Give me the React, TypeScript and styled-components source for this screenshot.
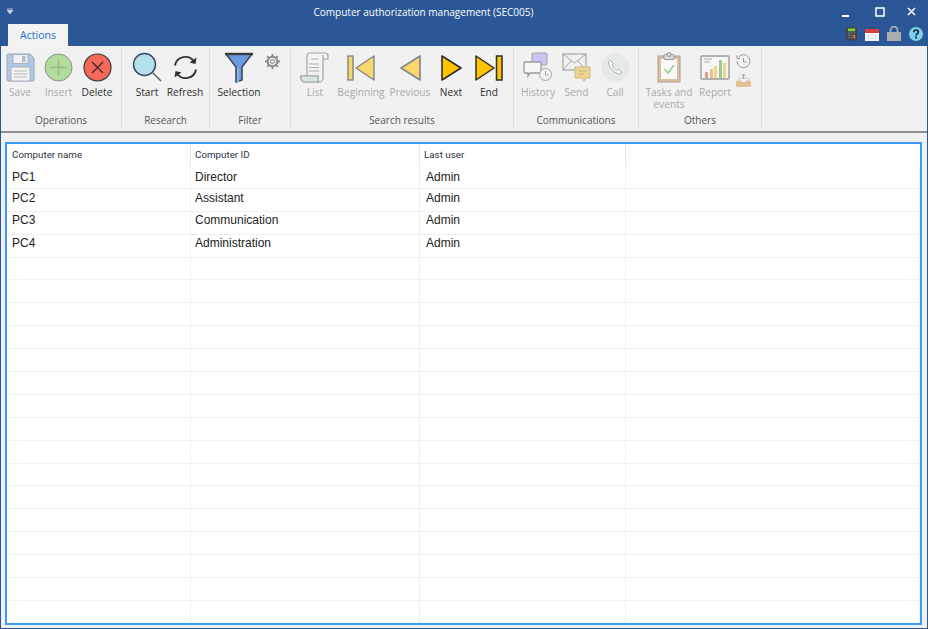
import React, { ReactNode } from "react";
import styled, { createGlobalStyle } from "styled-components";

const Global = createGlobalStyle`
  html, body { margin: 0; padding: 0; background: #fff; }
  * { box-sizing: border-box; }
`;

const Window = styled.div`
  width: 928px;
  height: 629px;
  display: flex;
  flex-direction: column;
  background: #f0f0f0;
  border: 1px solid #2b5797;
  border-top-width: 0;
  overflow: hidden;
  font-family: "Open Sans", "Liberation Sans", sans-serif;
`;

const TitleBar = styled.div`
  height: 24px;
  flex: none;
  display: flex;
  align-items: center;
  background: #2b5797;
  padding: 0 7px 1px 6px;
`;

const TitleText = styled.div`
  flex: 1;
  text-align: center;
  color: #fff;
  font-size: 10px;
  padding-right: 8px;
`;

const WindowControls = styled.div`
  display: flex;
  align-items: center;
  gap: 20px;
  padding-right: 4px;
`;

const TabBar = styled.div`
  height: 22px;
  flex: none;
  display: flex;
  justify-content: space-between;
  align-items: flex-end;
  background: #2b5797;
  padding: 0 4px 0 7px;
`;

const Tab = styled.div`
  width: 60px;
  height: 22px;
  padding-top: 4px;
  background: #f2f2f2;
  color: #2470c8;
  font-size: 10.5px;
  text-align: center;
`;

const QuickIcons = styled.div`
  display: flex;
  align-items: center;
  gap: 8px;
  padding-bottom: 5px;
`;

const Ribbon = styled.div`
  height: 87px;
  flex: none;
  display: flex;
  background: #f1f1f1;
  padding-top: 3px;
  border-bottom: 2px solid #8e8e8e;
`;

const Group = styled.section<{ $w: number; $pad: number }>`
  width: ${(p) => p.$w}px;
  height: 79px;
  flex: none;
  display: flex;
  flex-direction: column;
  padding-left: ${(p) => p.$pad}px;
  border-right: 1px solid #dcdcdc;
`;

const GroupTools = styled.div`
  flex: 1;
  display: flex;
`;

const GroupLabel = styled.div<{ $offset: number }>`
  height: 15px;
  margin-left: ${(p) => p.$offset}px;
  text-align: center;
  color: #555;
  font-size: 10px;
  line-height: 15px;
`;

const Tool = styled.div<{ $w: number; $off?: boolean }>`
  width: ${(p) => p.$w}px;
  flex: none;
  display: flex;
  flex-direction: column;
  align-items: center;
  font-size: 10.2px;
  line-height: 12px;
  text-align: center;
  color: ${(p) => (p.$off ? "#a9a9a9" : "#2e2e2e")};
`;

const ToolIcon = styled.div<{ $off?: boolean }>`
  height: 33px;
  margin-top: 2px;
  margin-bottom: 2px;
  display: flex;
  align-items: center;
  justify-content: center;
  opacity: ${(p) => (p.$off ? 0.55 : 1)};
`;

const SideIcons = styled.div`
  width: 16px;
  display: flex;
  flex-direction: column;
  align-items: center;
  gap: 5px;
  padding-top: 5px;
  opacity: 0.55;
`;

const GearSlot = styled.div`
  margin-left: -3px;
  padding-top: 3px;
  opacity: 0.75;
`;

const Workspace = styled.div`
  flex: 1;
  min-height: 0;
  padding: 9px 5px 3px 4px;
  background: #f0f0f0;
`;

const Frame = styled.div`
  height: 100%;
  border: 2px solid #3c9bf6;
  background: #fff;
  overflow: hidden;
`;

const HeaderRow = styled.div`
  display: grid;
  grid-template-columns: 184px 229px 206px 1fr;
  height: 22px;
`;

const HeaderCell = styled.div<{ $last?: boolean; $inset: number }>`
  padding-left: ${(p) => p.$inset}px;
  font-family: Roboto, "Liberation Sans", sans-serif;
  font-size: 9.8px;
  line-height: 22px;
  color: #2d3344;
  border-right: ${(p) => (p.$last ? "none" : "1px solid #e8e8e8")};
`;

const Row = styled.div`
  display: grid;
  grid-template-columns: 184px 229px 206px 1fr;
  height: 22.9px;
  border-bottom: 1px solid #f0f0f0;
`;

const Cell = styled.div<{ $inset: number; $lift: number }>`
  padding: ${(p) => 3 - p.$lift}px 0 0 ${(p) => p.$inset}px;
  font-family: "Liberation Sans", Arial, sans-serif;
  font-size: 12px;
  line-height: 17px;
  color: #222;
  border-right: 1px solid #f0f0f0;
`;

const Funnel = () => (
  <svg width="30" height="31" viewBox="0 0 30 31">
    <path d="M2 2h26L18 15v13l-6 2V15Z" fill="#6b9be0" stroke="#3d4a5c" strokeWidth="1.6" strokeLinejoin="round" />
    <path d="M1 2h28" stroke="#3a3a3a" strokeWidth="2.4" />
    <path d="M14 16v14" stroke="#8fb4e8" strokeWidth="2" />
  </svg>
);

const SaveIcon = () => (
  <svg width="29" height="29" viewBox="0 0 29 29">
    <path d="M2 1h22l4 4v22a1 1 0 0 1-1 1H2a1 1 0 0 1-1-1V2a1 1 0 0 1 1-1Z" fill="#7ea7dc" stroke="#5a6d85" />
    <rect x="7" y="1.500" width="15" height="9" fill="#eef0f3" stroke="#6b7b90" />
    <rect x="16" y="3" width="3.500" height="6" fill="#7d8ea5" />
    <rect x="5" y="14" width="19" height="14" fill="#f5f5f5" stroke="#6b7b90" />
    <path d="M8 18h13M8 21h13M8 24h13" stroke="#8a8a8a" />
  </svg>
);

const InsertIcon = () => (
  <svg width="29" height="29" viewBox="0 0 29 29">
    <circle cx="14.500" cy="14.500" r="13.500" fill="#7ecb55" stroke="#3f3f3f" />
    <path d="M14.500 6.500v16M6.500 14.500h16" stroke="#4f8a30" strokeWidth="1.400" />
  </svg>
);

const DeleteIcon = () => (
  <svg width="29" height="29" viewBox="0 0 29 29">
    <circle cx="14.500" cy="14.500" r="13.500" fill="#f4695a" stroke="#3c3c3c" strokeWidth="1.200" />
    <path d="M9 9l11 11M20 9 9 20" stroke="#3a2a2a" strokeWidth="1.300" />
  </svg>
);

const SearchIcon = () => (
  <svg width="30" height="31" viewBox="0 0 30 31">
    <circle cx="12.500" cy="12.500" r="11" fill="#b5e1ef" stroke="#3c4650" strokeWidth="1.400" />
    <path d="M20.500 20.500 29 29" stroke="#5c6670" strokeWidth="1.500" />
  </svg>
);

const RefreshIcon = () => (
  <svg width="27" height="27" viewBox="0 0 27 27" fill="none" stroke="#333" strokeWidth="1.900">
    <path d="M3 11.500A10.500 10.500 0 0 1 22 7.500" />
    <path d="M24 15.500A10.500 10.500 0 0 1 5 19.500" />
    <path d="M24.500 3.500 23.500 10l-6-1.500Z" fill="#333" stroke="none" />
    <path d="M2.500 23.500 3.500 17l6 1.500Z" fill="#333" stroke="none" />
  </svg>
);

const GearIcon = () => (
  <svg width="15" height="15" viewBox="0 0 15 15">
    <circle cx="7.500" cy="7.500" r="4.800" fill="none" stroke="#666" strokeWidth="2" />
    <circle cx="7.500" cy="7.500" r="2.100" fill="#ddd" stroke="#666" />
    <path
      d="M7.500 0v3M7.500 12v3M0 7.500h3M12 7.500h3M2.200 2.200l2.100 2.100M10.700 10.700l2.100 2.100M12.800 2.200l-2.100 2.100M4.300 10.700l-2.100 2.100"
      stroke="#666"
      strokeWidth="1.800"
    />
  </svg>
);

const ListIcon = () => (
  <svg width="30" height="31" viewBox="0 0 30 31">
    <path d="M7 27V4a3 3 0 0 1 3-3h15a3 3 0 0 1 3 3v3h-5" fill="#f6f6f6" stroke="#666" strokeWidth="1.200" />
    <path d="M23 3v23a4 4 0 0 1-4 4H5a4 4 0 0 1-4-4v-2h17v2" fill="#f3f3f3" stroke="#666" strokeWidth="1.200" />
    <path d="M1 24h17v3a3 3 0 0 0 1 3H5a4 4 0 0 1-4-4Z" fill="#c9dde0" stroke="#666" strokeWidth="1.200" />
    <path d="M11 7h7M9 12h10M9 15.500h10M9 19h10" stroke="#777" />
  </svg>
);

const Triangle = ({ fill, left }: { fill: string; left?: boolean }) => (
  <svg width="21" height="26" viewBox="0 0 21 26">
    <path
      d={left ? "M20 1v24L1 13Z" : "M1 1v24l19-12Z"}
      fill={fill}
      stroke="#2d2d2d"
      strokeWidth="1.600"
      strokeLinejoin="round"
    />
  </svg>
);

const BeginningIcon = () => (
  <svg width="28" height="26" viewBox="0 0 28 26">
    <rect x="1" y="1" width="5" height="24" fill="#ffc400" stroke="#2d2d2d" strokeWidth="1.400" />
    <path d="M27 1v24L9 13Z" fill="#ffc400" stroke="#2d2d2d" strokeWidth="1.400" strokeLinejoin="round" />
  </svg>
);

const EndIcon = () => (
  <svg width="28" height="26" viewBox="0 0 28 26">
    <path d="M1 1v24l18-12Z" fill="#ffc400" stroke="#2d2d2d" strokeWidth="1.500" strokeLinejoin="round" />
    <rect x="21.500" y="1" width="5.500" height="24" fill="#ffc400" stroke="#2d2d2d" strokeWidth="1.500" />
  </svg>
);

const HistoryIcon = () => (
  <svg width="30" height="31" viewBox="0 0 30 31">
    <rect x="9" y="1" width="15" height="12" rx="1" fill="#a89ff0" stroke="#666" />
    <path d="M2 10h15a1 1 0 0 1 1 1v9a1 1 0 0 1-1 1H7l-2 3v-3H2a1 1 0 0 1-1-1v-9a1 1 0 0 1 1-1Z" fill="#fff" stroke="#555" strokeWidth="1.300" />
    <circle cx="22.500" cy="22.500" r="6" fill="#f4f4f4" stroke="#666" />
    <path d="M22.500 19v4h3" fill="none" stroke="#666" />
  </svg>
);

const SendIcon = () => (
  <svg width="29" height="29" viewBox="0 0 29 29">
    <rect x="1" y="1" width="23" height="16" fill="#f2f2f2" stroke="#666" strokeWidth="1.200" />
    <path d="M1 1l11.500 9L24 1M1 17l8-9M24 17l-8-9" fill="none" stroke="#666" />
    <path d="M13 14h15v11h-4l-2 3-2-3h-7Z" fill="#f0c040" stroke="#a88a30" />
    <path d="M16 18h9M16 21h6" stroke="#9b7f28" />
  </svg>
);

const CallIcon = () => (
  <svg width="29" height="29" viewBox="0 0 29 29">
    <circle cx="14.500" cy="14.500" r="14" fill="#dbe4e2" />
    <path
      d="M9 7c-1.500 1-2 2.500-1.200 4.500 1.500 4 4.500 7.200 8.500 9 1.800.8 3.400.2 4.400-1.200l-3-3-2 1c-2-1-3.500-2.800-4.500-5l1.300-1.800Z"
      fill="#fff"
      stroke="#777"
    />
  </svg>
);

const TasksIcon = () => (
  <svg width="24" height="31" viewBox="0 0 24 31">
    <rect x="1" y="4" width="22" height="26" fill="#c9955a" stroke="#7c6038" />
    <rect x="4" y="7" width="16" height="20" fill="#fff" />
    <rect x="7" y="2.500" width="10" height="5" rx="1" fill="#c4c9cc" stroke="#555" />
    <circle cx="12" cy="2.500" r="2" fill="#c4c9cc" stroke="#555" />
    <path d="M7.500 17l3.500 4 6-8" fill="none" stroke="#46b04a" strokeWidth="1.500" />
  </svg>
);

const ReportIcon = () => (
  <svg width="30" height="25" viewBox="0 0 30 25">
    <rect x="1" y="1" width="28" height="23" rx="1" fill="#fafafa" stroke="#555" strokeWidth="1.400" />
    <path d="M4 4h8M4 7h6" stroke="#777" />
    <rect x="5" y="17" width="3" height="6" fill="#e2574c" />
    <rect x="10" y="14" width="3" height="9" fill="#ef9a3a" />
    <rect x="14" y="11" width="3" height="12" fill="#f0c030" />
    <rect x="19" y="5" width="3" height="18" fill="#4caf50" />
    <rect x="23" y="8" width="3" height="15" fill="#f0c030" />
  </svg>
);

const ClockIcon = () => (
  <svg width="15" height="15" viewBox="0 0 15 15" fill="none" stroke="#555">
    <path d="M2.500 3A6.500 6.500 0 1 1 1 7.500" />
    <path d="M1 1.500v3h3" />
    <path d="M7.500 4v4h3" />
  </svg>
);

const TrayIcon = () => (
  <svg width="15" height="13" viewBox="0 0 15 13">
    <path d="M0 7h15v5a1 1 0 0 1-1 1H1a1 1 0 0 1-1-1Z" fill="#d99a4a" />
    <path d="M2 7l1-3h9l1 3h-3v1.500H5V7Z" fill="#eee" stroke="#b38a50" strokeWidth="0.600" />
    <path d="M7.500 0v5M5.500 2l2-2 2 2" fill="none" stroke="#666" />
  </svg>
);

const CalculatorIcon = () => (
  <svg width="11" height="15" viewBox="0 0 12 15">
    <rect width="12" height="15" rx="1" fill="#3f4347" />
    <rect x="2" y="2" width="8" height="3" fill="#7ed04b" />
    <path d="M2 7h2M5 7h2M8 7h2M2 9.500h2M5 9.500h2M2 12h2M5 12h2" stroke="#8a8f94" />
    <path d="M9 9v4" stroke="#e8743b" strokeWidth="2" />
  </svg>
);

const CalendarIcon = () => (
  <svg width="14" height="15" viewBox="0 0 14 15">
    <path d="M4 3l3-2.500L10 3" fill="none" stroke="#333" strokeWidth="0.700" />
    <rect y="3" width="14" height="12" fill="#fff" />
    <rect y="3" width="14" height="4" fill="#d9413b" />
    <path d="M0 10h14M0 12.500h14M3.500 7v8M7 7v8M10.500 7v8" stroke="#d5d5d5" strokeWidth="0.600" />
  </svg>
);

const LockIcon = () => (
  <svg width="14" height="15" viewBox="0 0 14 15">
    <path d="M3.500 7V4a3.500 3.500 0 0 1 7 0v3" fill="none" stroke="#a9acb0" strokeWidth="1.800" />
    <rect y="6" width="14" height="9" fill="#a9acb0" />
  </svg>
);

const HelpIcon = () => (
  <svg width="14" height="14" viewBox="0 0 14 14">
    <circle cx="7" cy="7" r="7" fill="#7fd0ee" />
    <path d="M4.700 5.200C4.800 3.700 5.800 3 7 3s2.400.8 2.400 2c0 1.700-2.300 1.800-2.300 3.700" fill="none" stroke="#123" strokeWidth="1.600" />
    <rect x="6.200" y="9.700" width="1.800" height="1.800" fill="#123" />
  </svg>
);

const ToolItem = ({
  w,
  label,
  off,
  children,
}: {
  w: number;
  label: string;
  off?: boolean;
  children: ReactNode;
}) => (
  <Tool $w={w} $off={off}>
    <ToolIcon $off={off}>{children}</ToolIcon>
    {label}
  </Tool>
);

const HEADERS: [string, number][] = [
  ["Computer name", 5],
  ["Computer ID", 4],
  ["Last user", 4],
  ["", 0],
];

// name, id, user and how many px the text sits above the usual line
const ROWS: [string, string, string, number][] = [
  ["PC1", "Director", "Admin", 0],
  ["PC2", "Assistant", "Admin", 2],
  ["PC3", "Communication", "Admin", 3],
  ["PC4", "Administration", "Admin", 3],
];

const EMPTY_ROWS = 16;

export default function App() {
  return (
    <Window>
      <Global />
      <TitleBar>
        <svg width="6" height="7" viewBox="0 0 6 7">
          <path d="M0 0h6M0 2h6L3 6Z" stroke="#c6d2e4" fill="#c6d2e4" strokeWidth="0.800" />
        </svg>
        <TitleText>Computer authorization management (SEC005)</TitleText>
        <WindowControls>
          <svg width="7" height="9" viewBox="0 0 7 9" style={{ marginTop: 4 }}>
            <path d="M0 7h7" stroke="#fff" strokeWidth="2" />
          </svg>
          <svg width="10" height="10" viewBox="0 0 10 10" style={{ marginLeft: 6 }}>
            <rect x="1" y="1" width="8" height="8" fill="none" stroke="#fff" strokeWidth="1.500" />
          </svg>
          <svg width="9" height="9" viewBox="0 0 9 9" style={{ marginLeft: 2 }}>
            <path d="M1 1l7 7M8 1 1 8" stroke="#fff" strokeWidth="1.500" />
          </svg>
        </WindowControls>
      </TitleBar>
      <TabBar>
        <Tab>Actions</Tab>
        <QuickIcons>
          <CalculatorIcon />
          <CalendarIcon />
          <LockIcon />
          <HelpIcon />
        </QuickIcons>
      </TabBar>
      <Ribbon>
        <Group $w={121} $pad={0}>
          <GroupTools>
            <ToolItem w={38} label="Save" off><SaveIcon /></ToolItem>
            <ToolItem w={39} label="Insert" off><InsertIcon /></ToolItem>
            <ToolItem w={38} label="Delete"><DeleteIcon /></ToolItem>
          </GroupTools>
          <GroupLabel $offset={0}>Operations</GroupLabel>
        </Group>
        <Group $w={88} $pad={6}>
          <GroupTools>
            <ToolItem w={38} label="Start"><SearchIcon /></ToolItem>
            <ToolItem w={38} label="Refresh"><RefreshIcon /></ToolItem>
          </GroupTools>
          <GroupLabel $offset={-6}>Research</GroupLabel>
        </Group>
        <Group $w={81} $pad={0}>
          <GroupTools>
            <ToolItem w={58} label="Selection"><Funnel /></ToolItem>
            <GearSlot><GearIcon /></GearSlot>
          </GroupTools>
          <GroupLabel $offset={0}>Filter</GroupLabel>
        </Group>
        <Group $w={223} $pad={5}>
          <GroupTools>
            <ToolItem w={38} label="List" off><ListIcon /></ToolItem>
            <ToolItem w={54} label="Beginning" off><BeginningIcon /></ToolItem>
            <ToolItem w={44} label="Previous" off><Triangle fill="#ffc400" left /></ToolItem>
            <ToolItem w={38} label="Next"><Triangle fill="#ffc400" /></ToolItem>
            <ToolItem w={38} label="End"><EndIcon /></ToolItem>
          </GroupTools>
          <GroupLabel $offset={-5}>Search results</GroupLabel>
        </Group>
        <Group $w={125} $pad={5}>
          <GroupTools>
            <ToolItem w={38} label="History" off><HistoryIcon /></ToolItem>
            <ToolItem w={39} label="Send" off><SendIcon /></ToolItem>
            <ToolItem w={38} label="Call" off><CallIcon /></ToolItem>
          </GroupTools>
          <GroupLabel $offset={-5}>Communications</GroupLabel>
        </Group>
        <Group $w={123} $pad={4}>
          <GroupTools>
            <ToolItem w={52} label="Tasks and events" off><TasksIcon /></ToolItem>
            <ToolItem w={40} label="Report" off><ReportIcon /></ToolItem>
            <SideIcons>
              <ClockIcon />
              <TrayIcon />
            </SideIcons>
          </GroupTools>
          <GroupLabel $offset={-4}>Others</GroupLabel>
        </Group>
      </Ribbon>
      <Workspace>
        <Frame>
          <HeaderRow>
            {HEADERS.map(([h, inset]) => (
              <HeaderCell key={h} $last={!h} $inset={inset}>{h}</HeaderCell>
            ))}
          </HeaderRow>
          {ROWS.map(([name, id, user, lift]) => (
            <Row key={name}>
              <Cell $inset={5} $lift={lift}>{name}</Cell>
              <Cell $inset={4} $lift={lift}>{id}</Cell>
              <Cell $inset={6} $lift={lift}>{user}</Cell>
              <Cell $inset={0} $lift={0} />
            </Row>
          ))}
          {Array.from({ length: EMPTY_ROWS }, (_, i) => (
            <Row key={i}>
              <Cell $inset={0} $lift={0} />
              <Cell $inset={0} $lift={0} />
              <Cell $inset={0} $lift={0} />
              <Cell $inset={0} $lift={0} />
            </Row>
          ))}
        </Frame>
      </Workspace>
    </Window>
  );
}
